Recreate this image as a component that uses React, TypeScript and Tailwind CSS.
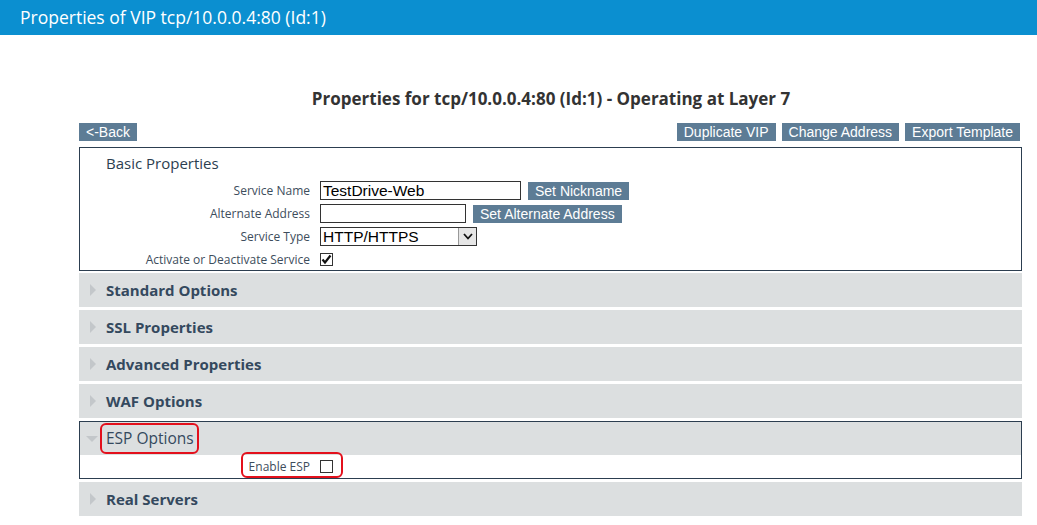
const sections = ["Standard Options", "SSL Properties", "Advanced Properties", "WAF Options"];

const Arrow = ({ open = false }: { open?: boolean }) =>
  open ? (
    <svg width="12" height="8" viewBox="0 0 12 8" className="shrink-0">
      <path d="M0 1 L12 1 L6 7 Z" fill="#c3c7ca" />
    </svg>
  ) : (
    <svg width="8" height="12" viewBox="0 0 8 12" className="shrink-0">
      <path d="M1 0 L7 6 L1 12 Z" fill="#c3c7ca" />
    </svg>
  );

const Btn = ({ children }: { children: string }) => (
  <span className="inline-flex h-[18px] items-center bg-[#5d7c95] px-[7px] text-[14px] leading-none text-white [font-family:'Liberation_Sans',Arial,sans-serif]">
    {children}
  </span>
);

const CheckBox = ({ checked }: { checked: boolean }) => (
  <span className="flex h-[13px] w-[13px] items-center justify-center border border-[#333] bg-white">
    {checked && (
      <svg width="11" height="11" viewBox="0 0 11 11">
        <path d="M1.5 5.5 L4 8.5 L9.5 1.5" stroke="#111" strokeWidth="2.2" fill="none" />
      </svg>
    )}
  </span>
);

const Row = ({ label, children }: { label: string; children: React.ReactNode }) => (
  <div className="flex h-[23px] items-center">
    <span className="w-[240px] pr-[10px] text-right text-[12px] text-[#3d4d5c]">{label}</span>
    <div className="flex items-center gap-[7px]">{children}</div>
  </div>
);

export default function App() {
  return (
    <div className="min-h-[525px] bg-white [font-family:'Open_Sans',sans-serif]">
      <header className="flex h-[35px] items-center bg-[#0b8fd0] pl-5 text-[17.5px] text-white">
        Properties of VIP tcp/10.0.0.4:80 (Id:1)
      </header>

      <div className="pt-[53px]">
        <h1 className="h-[22px] pl-[65px] text-center text-[17px] font-bold leading-[22px] text-[#333]">
          Properties for tcp/10.0.0.4:80 (Id:1) - Operating at Layer 7
        </h1>

        <div className="ml-[79px] w-[943px]">
          <div className="mt-[13px] flex items-center justify-between">
            <Btn>{"<-Back"}</Btn>
            <div className="mr-[2px] flex gap-[6px]">
              <Btn>Duplicate VIP</Btn>
              <Btn>Change Address</Btn>
              <Btn>Export Template</Btn>
            </div>
          </div>

          {/* basic properties */}
          <div className="mt-[6px] h-[124px] border border-[#2c3e50] pl-[26px] pt-[5px]">
            <div className="text-[15px] leading-[20px] text-[#2c3e50]">Basic Properties</div>
            <div className="ml-[-26px] mt-[6px]">
              <Row label="Service Name">
                <span className="flex h-[19px] w-[201px] items-center border border-[#333] px-[2px] text-[15.5px] [font-family:'Liberation_Sans',Arial,sans-serif]">
                  TestDrive-Web
                </span>
                <Btn>Set Nickname</Btn>
              </Row>
              <Row label="Alternate Address">
                <span className="h-[19px] w-[146px] border border-[#333]" />
                <Btn>Set Alternate Address</Btn>
              </Row>
              <Row label="Service Type">
                <span className="flex h-[19px] w-[157px] items-center justify-between border border-[#333] pl-[2px] text-[15.5px] [font-family:'Liberation_Sans',Arial,sans-serif]">
                  HTTP/HTTPS
                  <span className="flex h-[17px] w-[18px] items-center justify-center border-l border-[#999] bg-[#e6e6e6]">
                    <svg width="10" height="7" viewBox="0 0 10 7">
                      <path d="M1 1 L5 5.5 L9 1" stroke="#111" strokeWidth="1.8" fill="none" />
                    </svg>
                  </span>
                </span>
              </Row>
              <Row label="Activate or Deactivate Service">
                <CheckBox checked />
              </Row>
            </div>
          </div>

          {/* collapsed sections */}
          <div className="mt-[2px] flex flex-col gap-[3px]">
            {sections.map((s) => (
              <div key={s} className="flex h-[34px] items-center gap-[9px] bg-[#dcdfe0] pl-[10px]">
                <Arrow />
                <span className="text-[15px] font-bold text-[#34495e]">{s}</span>
              </div>
            ))}

            <div className="border border-[#2c3e50]">
              <div className="flex h-[33px] items-center gap-[8px] bg-[#dcdfe0] pl-[6px]">
                <Arrow open />
                <span className="relative text-[15.5px] text-[#34495e]">
                  ESP Options
                  <span className="absolute left-[-6px] right-[-5px] top-[-4px] bottom-[-4px] rounded-[6px] border-[2.5px] border-[#e3101c]" />
                </span>
              </div>
              <Row label="Enable ESP">
                <CheckBox checked={false} />
              </Row>
            </div>

            <div className="flex h-[34px] items-center gap-[9px] bg-[#dcdfe0] pl-[10px]">
              <Arrow />
              <span className="text-[15px] font-bold text-[#34495e]">Real Servers</span>
            </div>
          </div>
        </div>
      </div>

      {/* annotation around Enable ESP */}
      <div className="pointer-events-none absolute left-[241px] top-[452px] h-[26px] w-[102px] rounded-[6px] border-[2.5px] border-[#e3101c]" />
    </div>
  );
}
